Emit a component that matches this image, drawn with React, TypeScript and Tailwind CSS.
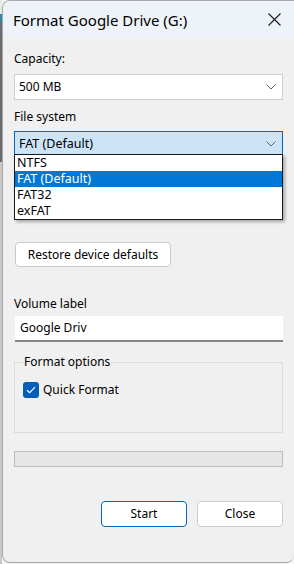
import React from "react";

const Chevron = () => (
  <svg width="10" height="6" viewBox="0 0 10 6" className="shrink-0">
    <polyline points="0.5,0.5 5,5 9.5,0.5" fill="none" stroke="#5f5f5f" strokeWidth="1" />
  </svg>
);

const fsOptions = ["NTFS", "FAT (Default)", "FAT32", "exFAT"];

const App = () => {
  return (
    <div
      className="w-[294px] h-[564px] flex bg-[#f4f4f4] text-black text-[12px] leading-[16px]"
      style={{ fontFamily: '"Noto Sans", "Open Sans", sans-serif' }}
    >
      {/* what is behind the window */}
      <div className="w-[2px] flex flex-col">
        <div className="h-[14px] bg-[#e8e8e8]" />
        <div className="h-[8px] bg-[#2a8fa6]" />
        <div className="h-[140px] bg-[#6b6b6b]" />
        <div className="flex-1 bg-[#c9c9c9]" />
      </div>

      <div className="flex-1 h-[563px] flex flex-col bg-[#f0f0f0] border-l border-t border-b border-[#a8a8a8] rounded-tl-[8px] rounded-bl-[8px] rounded-br-[8px] overflow-hidden">
        {/* title bar */}
        <div className="h-[37px] shrink-0 flex items-center justify-between bg-[#eef3f9] pl-[10px] pr-[13px]">
          <span className="text-[15px] leading-[20px]">Format Google Drive (G:)</span>
          <svg width="13" height="13" viewBox="0 0 13 13">
            <path d="M0.5 0.5 L12.5 12.5 M12.5 0.5 L0.5 12.5" stroke="#1a1a1a" strokeWidth="1.1" />
          </svg>
        </div>

        <div className="flex flex-col pl-[11px] pr-[11px]">
          <div className="mt-[13px]">Capacity:</div>
          <div className="mt-[7px] h-[26px] flex items-center justify-between bg-white border border-[#cfcfcf] pl-[4px] pr-[6px]">
            <span>500 MB</span>
            <Chevron />
          </div>

          <div className="mt-[9px]">File system</div>
          <div className="relative mt-[6px]">
            <div className="h-[25px] flex items-center justify-between bg-[#cce4f7] border border-[#0067c0] pl-[4px] pr-[6px]">
              <span className="text-[12.5px]">FAT (Default)</span>
              <Chevron />
            </div>
            {/* open dropdown list */}
            <div className="absolute left-0 top-[23px] w-[269px] z-10 bg-white border border-[#1b1b1b] shadow-[2px_2px_3px_rgba(0,0,0,0.3)] text-[12.5px]">
              {fsOptions.map((opt) => (
                <div
                  key={opt}
                  className={
                    opt === "FAT (Default)"
                      ? "h-[16px] flex items-center pl-[2px] bg-[#0078d7] text-white"
                      : "h-[16px] flex items-center pl-[2px]"
                  }
                >
                  {opt}
                </div>
              ))}
            </div>
          </div>

          <button className="mt-[86px] self-start h-[25px] w-[156px] ml-[1px] bg-white border border-[#c8c8c8] rounded-[4px] flex items-center justify-center">
            Restore device defaults
          </button>

          <div className="mt-[29px]">Volume label</div>
          <div className="mt-[4px] ml-[1px] h-[26px] flex items-center bg-white border-b-[2px] border-[#858585] pl-[5px]">
            Google Driv
          </div>

          {/* group box */}
          <div className="relative mt-[20px] h-[71px] border border-[#dcdcdc]">
            <span className="absolute left-[8px] -top-[9px] px-[1px] bg-[#f0f0f0] leading-[16px]">
              Format options
            </span>
            <div className="mt-[19px] ml-[8px] flex items-center gap-[4px]">
              <span className="w-[16px] h-[16px] rounded-[3px] bg-[#005fb8] flex items-center justify-center">
                <svg width="10" height="8" viewBox="0 0 10 8">
                  <polyline points="1,4.2 3.6,6.6 9,1.2" fill="none" stroke="white" strokeWidth="1.2" />
                </svg>
              </span>
              <span>Quick Format</span>
            </div>
          </div>

          <div className="mt-[18px] h-[16px] bg-[#e6e6e6] border border-[#bcbcbc]" />

          <div className="mt-[34px] flex justify-end gap-[10px]">
            <button className="w-[86px] h-[26px] bg-white border border-[#0067c0] rounded-[4px] flex items-center justify-center">
              Start
            </button>
            <button className="w-[86px] h-[26px] bg-white border border-[#cccccc] rounded-[4px] flex items-center justify-center">
              Close
            </button>
          </div>
        </div>
      </div>
    </div>
  );
};

export default App;
